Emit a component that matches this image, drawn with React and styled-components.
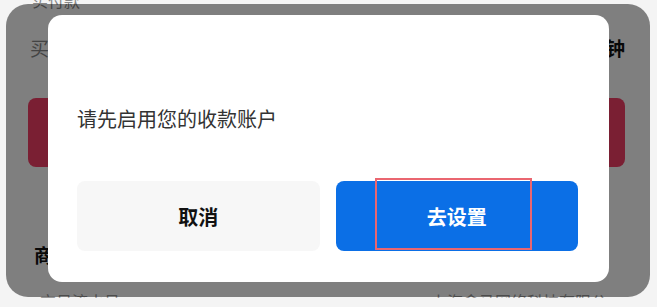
import styled, { createGlobalStyle } from "styled-components";

const GlobalStyle = createGlobalStyle`
  html, body {
    margin: 0;
    padding: 0;
    background: #f4f4f4;
    font-family: "Noto Sans CJK SC", "Noto Sans", sans-serif;
  }
`;

const App = () => {
  return (
    <>
      <GlobalStyle />
      <Page>
        <Card>
          <TopRow>实付款</TopRow>
          <InfoRow>
            <InfoLabel>买家付款时间</InfoLabel>
            <InfoValue>15分钟</InfoValue>
          </InfoRow>
          <RedButton>立即收款</RedButton>
          <SectionTitle>商品信息</SectionTitle>
          <BottomRow>
            <span>交易流水号</span>
            <span>上海盒马网络科技有限公</span>
          </BottomRow>

          <Overlay>
            <Modal>
              <Message>请先启用您的收款账户</Message>
              <Actions>
                <CancelButton>取消</CancelButton>
                <ConfirmButton>
                  去设置
                  <Highlight />
                </ConfirmButton>
              </Actions>
            </Modal>
          </Overlay>
        </Card>
      </Page>
    </>
  );
};

const Page = styled.div`
  width: 657px;
  height: 307px;
  box-sizing: border-box;
  padding: 4px 7px 10px 6px;
  overflow: hidden;
`;

const Card = styled.div`
  position: relative;
  height: 293px;
  box-sizing: border-box;
  padding: 0 25px 0 22px;
  background: #ffffff;
  border-radius: 22px;
  display: flex;
  flex-direction: column;

  & > * {
    flex-shrink: 0;
  }
`;

const TopRow = styled.div`
  margin-top: -14px;
  font-size: 16px;
  line-height: 20px;
  color: #888;
  padding-left: 4px;
`;

const InfoRow = styled.div`
  margin-top: 26px;
  display: flex;
  justify-content: space-between;
  font-size: 19px;
  line-height: 24px;
`;

const InfoLabel = styled.span`
  color: #888;
  padding-left: 2px;
`;

const InfoValue = styled.span`
  color: #111;
  font-weight: 700;
`;

const RedButton = styled.div`
  margin-top: 38px;
  height: 69px;
  border-radius: 8px;
  background: #f43f67;
  color: #fff;
  font-size: 20px;
  display: flex;
  align-items: center;
  justify-content: center;
`;

const SectionTitle = styled.div`
  margin-top: 75px;
  font-size: 19px;
  line-height: 26px;
  font-weight: 700;
  color: #111;
  padding-left: 6px;
`;

/* only the top of this row peeks out under the card edge */
const BottomRow = styled.div`
  margin-top: 23px;
  height: 7px;
  overflow: hidden;
  display: flex;
  justify-content: space-between;
  font-size: 16px;
  line-height: 20px;
  color: #999;
  padding: 0 18px 0 12px;
`;

const Overlay = styled.div`
  position: absolute;
  inset: 0;
  border-radius: 22px;
  background: rgba(0, 0, 0, 0.5);
  display: flex;
  justify-content: center;
  align-items: flex-start;
`;

const Modal = styled.div`
  margin-top: 11px;
  margin-left: 1px;
  width: 561px;
  height: 267px;
  box-sizing: border-box;
  padding: 0 31px 31px 29px;
  background: #ffffff;
  border-radius: 14px;
  display: flex;
  flex-direction: column;
`;

const Message = styled.div`
  margin-top: 90px;
  font-size: 20px;
  line-height: 28px;
  color: #333;
`;

const Actions = styled.div`
  margin-top: auto;
  display: flex;
  gap: 16px;
`;

const ActionButton = styled.div`
  flex: 1;
  height: 70px;
  border-radius: 8px;
  display: flex;
  align-items: center;
  justify-content: center;
  font-size: 20px;
  font-weight: 700;
`;

const CancelButton = styled(ActionButton)`
  background: #f7f7f7;
  color: #111;
`;

const ConfirmButton = styled(ActionButton)`
  position: relative;
  background: #0b6fe6;
  color: #fff;
`;

const Highlight = styled.div`
  position: absolute;
  left: 39px;
  top: -3px;
  width: 157px;
  height: 72px;
  box-sizing: border-box;
  border: 2px solid #ea6670;
`;

export default App;
